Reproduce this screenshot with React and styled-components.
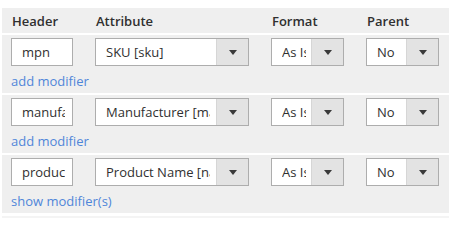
import React from 'react';
import styled, { createGlobalStyle } from 'styled-components';

const GlobalStyle = createGlobalStyle`
  html, body {
    margin: 0;
    padding: 0;
    background: #ffffff;
    font-family: "Open Sans", "Liberation Sans", sans-serif;
  }
`;

const Panel = styled.div`
  margin: 8px 1px 0 2px;
  width: 447px;
`;

const Grid = styled.div`
  display: grid;
  grid-template-columns: 84px 176px 95px 1fr;
  align-items: start;
  background: #efefef;
  padding: ${props => props.head ? '4px 0 3px 9px' : '3px 0 3px 9px'};
  border-bottom: 2px solid #ffffff;
  height: ${props => props.head ? '18px' : '52px'};
`;

const HeadCell = styled.div`
  font-size: 13px;
  line-height: 18px;
  font-weight: 600;
  color: #303030;
  padding-left: 1px;
`;

const Cell = styled.div`
  display: flex;
  flex-direction: column;
  align-items: flex-start;
  min-width: 0;
`;

const TextInput = styled.input`
  box-sizing: border-box;
  width: 62px;
  height: 28px;
  margin: 0;
  padding: 0 7px 0 10px;
  border: 1px solid #adadad;
  border-radius: 0;
  background: #ffffff;
  font-family: "Open Sans", "Liberation Sans", sans-serif;
  font-size: 13px;
  color: #303030;
  outline: none;
`;

const ModLink = styled.a`
  margin-top: 6px;
  font-size: 13px;
  line-height: 18px;
  white-space: nowrap;
  color: #4f86d9;
  text-decoration: none;
  cursor: pointer;
`;

const Select = styled.div`
  box-sizing: border-box;
  display: flex;
  width: ${props => props.w}px;
  height: 28px;
  border: 1px solid #adadad;
  background: #ffffff;
`;

const SelectText = styled.div`
  flex: 1;
  min-width: 0;
  padding: 0 ${props => props.pr}px 0 10px;
  font-size: 13px;
  line-height: 26px;
  color: #303030;
`;

const Clip = styled.span`
  display: block;
  overflow: hidden;
  white-space: nowrap;
`;

const Arrow = styled.div`
  flex: 0 0 31px;
  display: flex;
  align-items: center;
  justify-content: center;
  background: #e3e3e3;
  border-left: 1px solid #d6d6d6;
`;

const Caret = () => (
  <svg width="8" height="5" viewBox="0 0 8 5">
    <path d="M0 0 H8 L4 5 Z" fill="#3a3a3a" />
  </svg>
);

const Footer = styled.div`
  height: 2px;
  margin-top: 1px;
  background: #f4f4f4;
`;

const Dropdown = ({ w, pr, children }) => (
  <Select w={w}>
    <SelectText pr={pr}>
      <Clip>{children}</Clip>
    </SelectText>
    <Arrow>
      <Caret />
    </Arrow>
  </Select>
);

const rows = [
  { header: 'mpn', attr: 'SKU [sku]', link: 'add modifier' },
  { header: 'manufacturer', attr: 'Manufacturer [manufacturer]', link: 'add modifier' },
  { header: 'product_name', attr: 'Product Name [name]', link: 'show modifier(s)' },
];

export default function App() {
  return (
    <>
      <GlobalStyle />
      <Panel>
        <Grid head>
          <HeadCell>Header</HeadCell>
          <HeadCell>Attribute</HeadCell>
          <HeadCell>Format</HeadCell>
          <HeadCell>Parent</HeadCell>
        </Grid>
        {rows.map(row => (
          <Grid key={row.header}>
            <Cell>
              <TextInput defaultValue={row.header} readOnly />
              <ModLink>{row.link}</ModLink>
            </Cell>
            <Cell>
              <Dropdown w={154} pr={6}>{row.attr}</Dropdown>
            </Cell>
            <Cell>
              <Dropdown w={73} pr={5}>As Is</Dropdown>
            </Cell>
            <Cell>
              <Dropdown w={73} pr={5}>No</Dropdown>
            </Cell>
          </Grid>
        ))}
        <Footer />
      </Panel>
    </>
  );
}
